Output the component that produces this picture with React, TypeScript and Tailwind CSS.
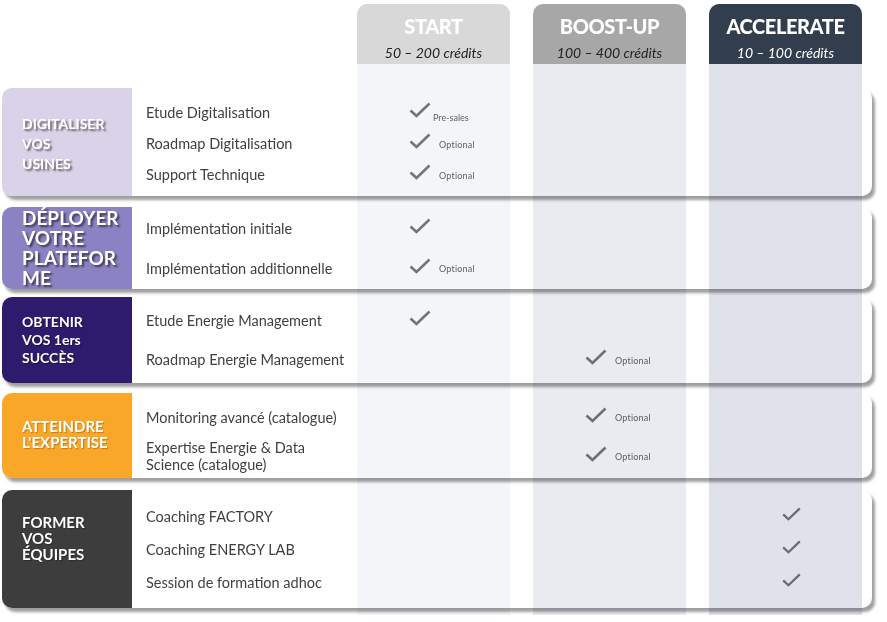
import React from "react";

const Check = ({ small }: { small?: boolean }) => (
  <svg width={small ? 21 : 22} height={small ? 14 : 16} viewBox="0 0 22 16" className="shrink-0">
    <path d="M1.5 8.5 L7.5 14 L20.5 1.5" fill="none" stroke="#7a7a7a" strokeWidth="2.6" strokeLinejoin="miter" />
  </svg>
);

type Mark = { col: 0 | 1 | 2; note?: string; pre?: boolean };
type Item = { text: React.ReactNode; h: string; mark?: Mark };

const Cell = ({ mark, col }: { mark?: Mark; col: number }) => {
  const has = mark && mark.col === col;
  return (
    <div className={col === 2 ? "w-[153px] flex items-center pl-[72px]" : "w-[153px] flex items-center pl-[52px]"}>
      {has && (
        <>
          <div className="-mt-[5px]">
            <Check small={col === 2} />
          </div>
          {mark!.note && (
            <span
              className={
                mark!.pre
                  ? "ml-[2px] mt-[10px] text-[9px] text-[#666]"
                  : "ml-[8px] mt-[2px] text-[9px] text-[#666] tracking-[0.2px]"
              }
            >
              {mark!.note}
            </span>
          )}
        </>
      )}
    </div>
  );
};

const Row = ({
  label,
  labelBg,
  labelClass,
  items,
  rowClass,
  padClass,
}: {
  label: React.ReactNode;
  labelBg: string;
  labelClass: string;
  items: Item[];
  rowClass: string;
  padClass: string;
}) => (
  <div
    className={`${rowClass} col-start-2 col-end-10 flex rounded-[10px] bg-white shadow-[3px_4px_3px_rgba(0,0,0,0.38)]`}
  >
    <div className={`${labelBg} w-[130px] shrink-0 rounded-l-[10px] flex flex-col justify-center pl-[20px] text-white font-bold ${labelClass}`}>
      {label}
    </div>
    <div className={`flex flex-col ${padClass}`}>
      {items.map((it, i) => (
        <div key={i} className={`flex ${it.h}`}>
          <div className="w-[225px] pl-[14px] flex items-center text-[14.5px] leading-[17px] text-[#3f3f3f]">{it.text}</div>
          <Cell mark={it.mark} col={0} />
          <div className="w-[23px]" />
          <Cell mark={it.mark} col={1} />
          <div className="w-[23px]" />
          <Cell mark={it.mark} col={2} />
        </div>
      ))}
    </div>
  </div>
);

const Column = ({
  colClass,
  headBg,
  bodyBg,
  title,
  sub,
  subColor,
}: {
  colClass: string;
  headBg: string;
  bodyBg: string;
  title: string;
  sub: string;
  subColor: string;
}) => (
  <div className={`${colClass} row-start-2 row-end-14 flex flex-col pointer-events-none`}>
    <div className={`${headBg} h-[60px] rounded-t-[10px] flex flex-col items-center`}>
      <div className="mt-[10px] text-[20px] leading-[24px] font-black tracking-[-0.4px] text-white">{title}</div>
      <div className={`mt-[7px] text-[14px] leading-[16px] italic ${subColor}`}>{sub}</div>
    </div>
    <div className={`${bodyBg} flex-1 mix-blend-multiply`} />
  </div>
);

export default function App() {
  const shadow1 = "[text-shadow:2px_2px_2px_rgba(0,0,0,0.55)]";
  return (
    <div className="w-[887px] h-[622px] bg-white overflow-hidden font-['Lato',sans-serif]">
      <div className="grid grid-cols-[2px_130px_225px_153px_23px_153px_23px_153px_10px_15px] grid-rows-[4px_60px_24px_108px_11px_82px_8px_86px_10px_85px_12px_118px_7px]">
        <Row
          rowClass="row-start-4"
          labelBg="bg-[#d9d2e8]"
          labelClass={`text-[14px] leading-[20px] pt-[3px] font-black ${shadow1}`}
          label={
            <>
              <div>DIGITALISER</div>
              <div>VOS</div>
              <div>USINES</div>
            </>
          }
          padClass="pt-[9px]"
          items={[
            { text: "Etude Digitalisation", h: "h-[31px]", mark: { col: 0, note: "Pre-sales", pre: true } },
            { text: "Roadmap Digitalisation", h: "h-[31px]", mark: { col: 0, note: "Optional" } },
            { text: "Support Technique", h: "h-[31px]", mark: { col: 0, note: "Optional" } },
          ]}
        />
        <Row
          rowClass="row-start-6"
          labelBg="bg-[#8a82c2]"
          labelClass={`text-[19px] leading-[20px] font-black ${shadow1}`}
          label={
            <>
              <div>DÉPLOYER</div>
              <div>VOTRE</div>
              <div>PLATEFOR</div>
              <div>ME</div>
            </>
          }
          padClass="pt-[1px]"
          items={[
            { text: "Implémentation initiale", h: "h-[40px]", mark: { col: 0 } },
            { text: "Implémentation additionnelle", h: "h-[40px]", mark: { col: 0, note: "Optional" } },
          ]}
        />
        <Row
          rowClass="row-start-8"
          labelBg="bg-[#2f1b6e]"
          labelClass="text-[14px] leading-[18px] font-black [text-shadow:1px_1px_1px_rgba(0,0,0,0.4)]"
          label={
            <>
              <div>OBTENIR</div>
              <div>VOS 1ers</div>
              <div>SUCCÈS</div>
            </>
          }
          padClass="pt-[4px]"
          items={[
            { text: "Etude Energie Management", h: "h-[39px]", mark: { col: 0 } },
            { text: "Roadmap Energie Management", h: "h-[39px]", mark: { col: 1, note: "Optional" } },
          ]}
        />
        <Row
          rowClass="row-start-10"
          labelBg="bg-[#f9a728]"
          labelClass="text-[15px] leading-[16px] pb-[4px] font-black [text-shadow:1px_1px_1px_rgba(0,0,0,0.25)]"
          label={
            <>
              <div>ATTEINDRE</div>
              <div>L'EXPERTISE</div>
            </>
          }
          padClass="pt-[6px]"
          items={[
            { text: "Monitoring avancé (catalogue)", h: "h-[36px]", mark: { col: 1, note: "Optional" } },
            {
              text: (
                <span>
                  Expertise Energie &amp; Data
                  <br />
                  Science (catalogue)
                </span>
              ),
              h: "h-[42px]",
              mark: { col: 1, note: "Optional" },
            },
          ]}
        />
        <Row
          rowClass="row-start-12"
          labelBg="bg-[#3d3d3e]"
          labelClass="text-[15px] leading-[16px] pb-[22px] font-black [text-shadow:1px_1px_1px_rgba(0,0,0,0.3)]"
          label={
            <>
              <div>FORMER</div>
              <div>VOS</div>
              <div>ÉQUIPES</div>
            </>
          }
          padClass="pt-[10px]"
          items={[
            { text: "Coaching FACTORY", h: "h-[33px]", mark: { col: 2 } },
            { text: "Coaching ENERGY LAB", h: "h-[33px]", mark: { col: 2 } },
            { text: "Session de formation adhoc", h: "h-[33px]", mark: { col: 2 } },
          ]}
        />
        <Column
          colClass="col-start-4"
          headBg="bg-[#d8d8d8]"
          bodyBg="bg-[#f4f5f9]"
          title="START"
          sub="50 – 200 crédits"
          subColor="text-[#222]"
        />
        <Column
          colClass="col-start-6"
          headBg="bg-[#a7a7a7]"
          bodyBg="bg-[#e9ebf0]"
          title="BOOST-UP"
          sub="100 – 400 crédits"
          subColor="text-[#222]"
        />
        <Column
          colClass="col-start-8"
          headBg="bg-[#323d4e]"
          bodyBg="bg-[#dfe2ea]"
          title="ACCELERATE"
          sub="10 – 100 crédits"
          subColor="text-white"
        />
      </div>
    </div>
  );
}
